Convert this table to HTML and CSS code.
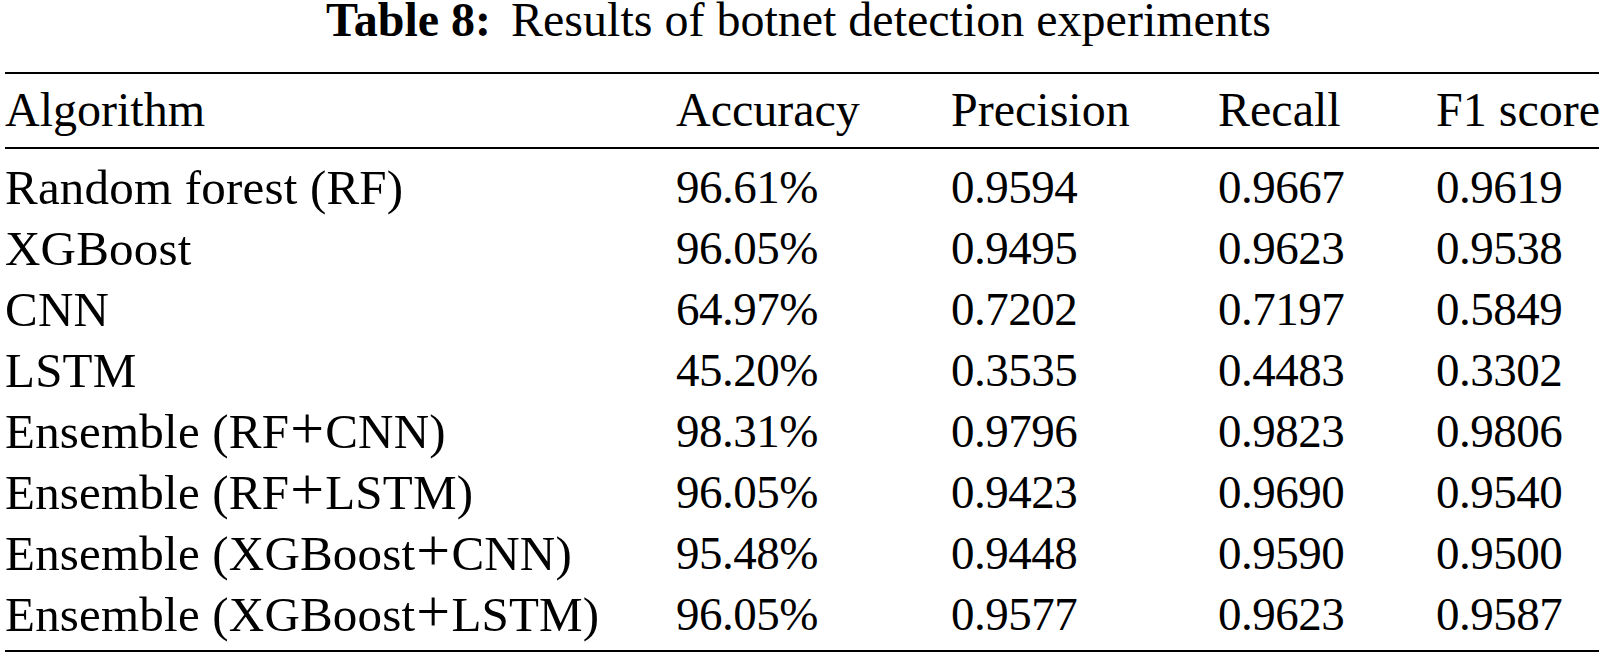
FILE: index.html
```html
<!DOCTYPE html>
<html>
<head>
<meta charset="utf-8">
<link rel="stylesheet" href="styles.css">
</head>
<body>
<div class="page">
  <div class="caption"><span class="label">Table 8:</span> Results of botnet detection experiments</div>
  <div class="table">
    <div class="head row">
      <div>Algorithm</div><div>Accuracy</div><div>Precision</div><div>Recall</div><div>F1 score</div>
    </div>
    <div class="body">
      <div class="row"><div class="name">Random forest (RF)</div><div class="num">96.61%</div><div class="num">0.9594</div><div class="num">0.9667</div><div class="num">0.9619</div></div>
      <div class="row"><div class="name">XGBoost</div><div class="num">96.05%</div><div class="num">0.9495</div><div class="num">0.9623</div><div class="num">0.9538</div></div>
      <div class="row"><div class="name">CNN</div><div class="num">64.97%</div><div class="num">0.7202</div><div class="num">0.7197</div><div class="num">0.5849</div></div>
      <div class="row"><div class="name">LSTM</div><div class="num">45.20%</div><div class="num">0.3535</div><div class="num">0.4483</div><div class="num">0.3302</div></div>
      <div class="row"><div class="name">Ensemble (RF<span class="plus">+</span>CNN)</div><div class="num">98.31%</div><div class="num">0.9796</div><div class="num">0.9823</div><div class="num">0.9806</div></div>
      <div class="row"><div class="name">Ensemble (RF<span class="plus">+</span>LSTM)</div><div class="num">96.05%</div><div class="num">0.9423</div><div class="num">0.9690</div><div class="num">0.9540</div></div>
      <div class="row"><div class="name">Ensemble (XGBoost<span class="plus">+</span>CNN)</div><div class="num">95.48%</div><div class="num">0.9448</div><div class="num">0.9590</div><div class="num">0.9500</div></div>
      <div class="row"><div class="name">Ensemble (XGBoost<span class="plus">+</span>LSTM)</div><div class="num">96.05%</div><div class="num">0.9577</div><div class="num">0.9623</div><div class="num">0.9587</div></div>
    </div>
  </div>
</div>
</body>
</html>
```

FILE: styles.css
```css
html, body {
  margin: 0;
  padding: 0;
  background: #ffffff;
}
body {
  font-family: "Liberation Serif", "Times New Roman", serif;
  color: #000000;
  font-size: 48px;
}
.page {
  padding: 0 5px;
}
.caption {
  text-align: center;
  line-height: 40px;
  height: 40px;
  margin-bottom: 32px;
  padding-right: 7px;
  white-space: nowrap;
}
.caption .label {
  font-weight: bold;
  margin-right: 8px;
}
.table {
  border-top: 2px solid #000;
  border-bottom: 2px solid #000;
}
.row {
  display: grid;
  grid-template-columns: 671px 275px 267px 218px 1fr;
  line-height: 61px;
  white-space: nowrap;
}
.head {
  line-height: 60px;
  padding: 6px 0 7px;
  border-bottom: 2px solid #000;
}
.body {
  padding: 8px 0 5px;
}
.name {
  font-size: 49px;
  letter-spacing: 0.2px;
}
.plus {
  font-size: 60px;
  line-height: 0;
  margin: 0 1px;
}
.num {
  font-size: 47px;
  letter-spacing: -0.5px;
}
```
